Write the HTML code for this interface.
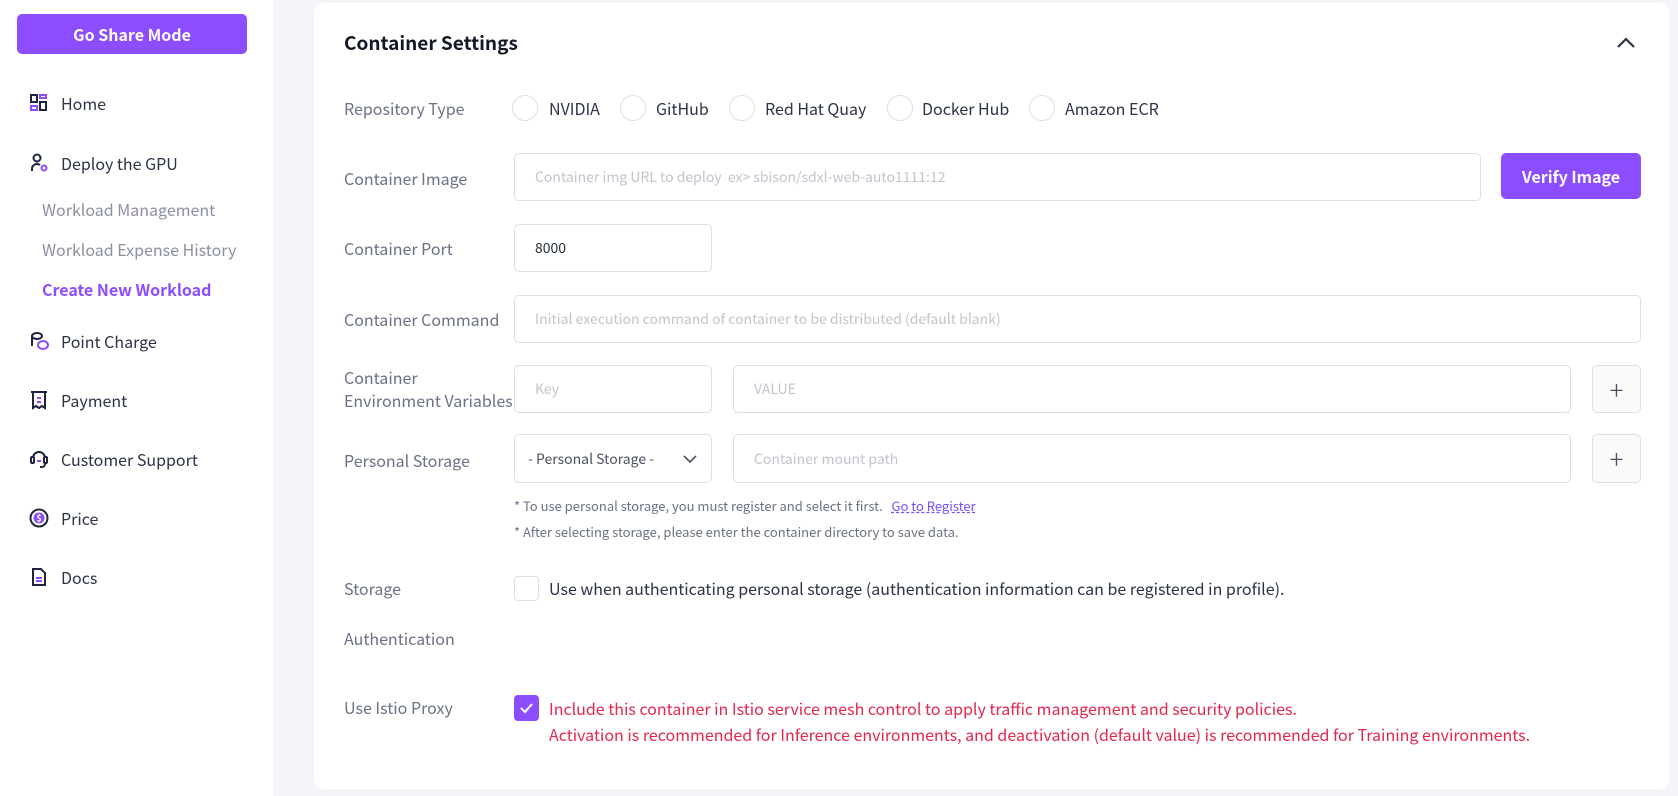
<!DOCTYPE html>
<html><head><meta charset="utf-8"><style>
*{box-sizing:border-box;margin:0;padding:0}
body{width:1678px;height:796px;overflow:hidden;background:#f3f5f9;font-family:"Noto Sans CJK KR","Liberation Sans",sans-serif;position:relative;color:#1f2937}
.abs{position:absolute}
#side{left:0;top:0;width:273px;height:796px;background:#fff}
.btn{background:#8b4dfd;color:#fff;font-weight:700;border-radius:5px;display:flex;align-items:center;justify-content:center}
.nav{left:61px;font-size:16px;color:#2d3348;line-height:20px;transform:translateY(-10px)}
.sub{left:42px;font-size:16px;color:#8c8fa3;line-height:20px;transform:translateY(-10px)}
.ico{left:29px;width:20px;height:20px;transform:translateY(-10px)}
#card{left:314px;top:3px;width:1355px;height:786px;background:#fff;border-radius:10px}
.lbl{left:344px;font-size:16px;color:#6b7186;line-height:24px;transform:translateY(-12px)}
.inp{border:1px solid #dcdfe6;border-radius:5px;background:#fff;font-size:14px;color:#c0c4cc;display:flex;align-items:center;padding-left:20px}
.radio{width:26px;height:26px;border:1px solid #dcdfe6;border-radius:50%;transform:translate(-13px,-13px)}
.rl{font-size:16px;color:#2d3348;transform:translateY(-12px);line-height:24px}
.plus{border:1px solid #dcdfe6;border-radius:5px;background:#fafafa;display:flex;align-items:center;justify-content:center;font-size:26px;color:#4b5060;font-weight:300}
.note{left:514px;font-size:13px;color:#6b7186;transform:translateY(-9px);line-height:18px}
.red{left:549px;font-size:16px;color:#e5264d;line-height:24px;transform:translateY(-12px)}
</style></head><body>
<div id="side" class="abs"></div>
<div class="abs btn" style="left:17px;top:14px;width:230px;height:40px;font-size:16px">Go Share Mode</div>

<svg class="abs ico" style="top:103px" viewBox="0 0 20 20" fill="none" stroke-width="2"><rect x="2" y="2" width="6" height="7" stroke="#1f2540"/><rect x="11" y="2" width="6" height="3" stroke="#8b4dfd"/><rect x="2" y="13" width="6" height="4" stroke="#8b4dfd"/><rect x="11" y="9" width="6" height="8" stroke="#1f2540"/></svg>
<div class="abs nav" style="top:103px">Home</div>
<svg class="abs ico" style="top:163px" viewBox="0 0 20 20" fill="none" stroke-width="2"><circle cx="8" cy="5" r="3.5" stroke="#1f2540"/><path d="M3 18v-2a5 5 0 0 1 8-4" stroke="#1f2540"/><circle cx="15" cy="15" r="2.5" stroke="#8b4dfd"/></svg>
<div class="abs nav" style="top:163px">Deploy the GPU</div>
<div class="abs sub" style="top:209px">Workload Management</div>
<div class="abs sub" style="top:249px">Workload Expense History</div>
<div class="abs sub" style="top:289px;color:#8b4dfd;font-weight:700">Create New Workload</div>
<svg class="abs ico" style="top:341px" viewBox="0 0 20 20" fill="none" stroke-width="2"><ellipse cx="8" cy="5" rx="5" ry="3" stroke="#1f2540"/><path d="M3 5v10" stroke="#1f2540"/><ellipse cx="14" cy="14" rx="5" ry="4" stroke="#8b4dfd"/></svg>
<div class="abs nav" style="top:341px">Point Charge</div>
<svg class="abs ico" style="top:400px" viewBox="0 0 20 20" fill="none" stroke-width="2"><path d="M2 2h16M4 2v16l3-2 3 2 3-2 3 2V2" stroke="#1f2540"/><path d="M8 8h4M8 12h4" stroke="#8b4dfd"/></svg>
<div class="abs nav" style="top:400px">Payment</div>
<svg class="abs ico" style="top:459px" viewBox="0 0 20 20" fill="none" stroke-width="2"><path d="M4 9a6 6 0 0 1 12 0" stroke="#1f2540"/><rect x="2" y="8" width="3" height="6" rx="1" stroke="#1f2540"/><rect x="15" y="8" width="3" height="6" rx="1" stroke="#1f2540"/><path d="M16 14v1a3 3 0 0 1-3 3h-2" stroke="#1f2540"/><path d="M8 12h4" stroke="#8b4dfd"/></svg>
<div class="abs nav" style="top:459px">Customer Support</div>
<svg class="abs ico" style="top:518px" viewBox="0 0 20 20" fill="none"><circle cx="10" cy="10" r="8.5" stroke="#1f2540" stroke-width="2"/><circle cx="10" cy="10" r="5.5" fill="#8b4dfd"/><text x="10" y="13.5" font-size="9" fill="#fff" text-anchor="middle" font-weight="700">$</text></svg>
<div class="abs nav" style="top:518px">Price</div>
<svg class="abs ico" style="top:577px" viewBox="0 0 20 20" fill="none" stroke-width="2"><path d="M4 2h8l4 4v12H4z" stroke="#1f2540"/><path d="M7 11h6M7 14h6" stroke="#8b4dfd"/></svg>
<div class="abs nav" style="top:577px">Docs</div>

<div id="card" class="abs"></div>
<div class="abs" style="left:344px;top:29px;font-size:19px;font-weight:700;color:#111827">Container Settings</div>
<svg class="abs" style="left:1616px;top:36px" width="20" height="14" viewBox="0 0 20 14"><path d="M2 11l8-8 8 8" stroke="#2d3348" stroke-width="2.2" fill="none"/></svg>

<div class="abs lbl" style="top:108px">Repository Type</div>
<div class="abs radio" style="left:525px;top:108px"></div><div class="abs rl" style="left:549px;top:108px">NVIDIA</div>
<div class="abs radio" style="left:633px;top:108px"></div><div class="abs rl" style="left:656px;top:108px">GitHub</div>
<div class="abs radio" style="left:742px;top:108px"></div><div class="abs rl" style="left:765px;top:108px">Red Hat Quay</div>
<div class="abs radio" style="left:900px;top:108px"></div><div class="abs rl" style="left:922px;top:108px">Docker Hub</div>
<div class="abs radio" style="left:1042px;top:108px"></div><div class="abs rl" style="left:1065px;top:108px">Amazon ECR</div>

<div class="abs lbl" style="top:178px">Container Image</div>
<div class="abs inp" style="left:514px;top:153px;width:967px;height:48px">Container img URL to deploy &nbsp;ex&gt; sbison/sdxl-web-auto1111:12</div>
<div class="abs btn" style="left:1501px;top:153px;width:140px;height:46px;font-size:16px">Verify Image</div>

<div class="abs lbl" style="top:248px">Container Port</div>
<div class="abs inp" style="left:514px;top:224px;width:198px;height:48px;color:#1f2937">8000</div>

<div class="abs lbl" style="top:319px">Container Command</div>
<div class="abs inp" style="left:514px;top:295px;width:1127px;height:48px">Initial execution command of container to be distributed (default blank)</div>

<div class="abs lbl" style="top:377px">Container</div>
<div class="abs lbl" style="top:400px">Environment Variables</div>
<div class="abs inp" style="left:514px;top:365px;width:198px;height:48px">Key</div>
<div class="abs inp" style="left:733px;top:365px;width:838px;height:48px">VALUE</div>
<div class="abs plus" style="left:1592px;top:365px;width:49px;height:48px">+</div>

<div class="abs lbl" style="top:460px">Personal Storage</div>
<div class="abs inp" style="left:514px;top:434px;width:198px;height:49px;color:#4b5060;padding-left:13px">- Personal Storage -
<svg style="position:absolute;left:168px;top:20px" width="14" height="9" viewBox="0 0 14 9"><path d="M1 1l6 6 6-6" stroke="#4b5060" stroke-width="1.6" fill="none"/></svg></div>
<div class="abs inp" style="left:733px;top:434px;width:838px;height:49px">Container mount path</div>
<div class="abs plus" style="left:1592px;top:434px;width:49px;height:49px">+</div>

<div class="abs note" style="top:506px">* To use personal storage, you must register and select it first. &nbsp;&nbsp;<span style="color:#7b4dfd;text-decoration:underline dashed">Go to Register</span></div>
<div class="abs note" style="top:532px">* After selecting storage, please enter the container directory to save data.</div>

<div class="abs lbl" style="top:588px">Storage</div>
<div class="abs lbl" style="top:638px">Authentication</div>
<div class="abs" style="left:514px;top:576px;width:25px;height:25px;border:1px solid #dcdfe6;border-radius:4px"></div>
<div class="abs rl" style="left:549px;top:588px">Use when authenticating personal storage (authentication information can be registered in profile).</div>

<div class="abs lbl" style="top:707px">Use Istio Proxy</div>
<div class="abs" style="left:514px;top:695px;width:25px;height:26px;background:#8b4dfd;border-radius:4px"><svg width="25" height="26" viewBox="0 0 25 26"><path d="M7 13l4 4 7-8" stroke="#fff" stroke-width="2" fill="none"/></svg></div>
<div class="abs red" style="top:708px">Include this container in Istio service mesh control to apply traffic management and security policies.</div>
<div class="abs red" style="top:734px">Activation is recommended for Inference environments, and deactivation (default value) is recommended for Training environments.</div>
</body></html>
